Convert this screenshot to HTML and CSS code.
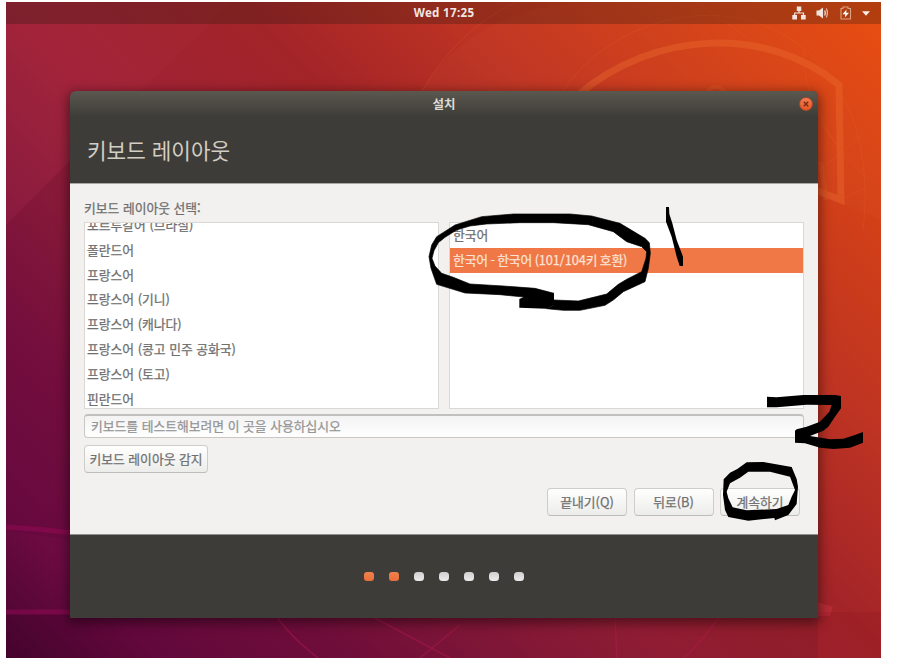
FILE: index.html
```html
<!DOCTYPE html>
<html lang="ko">
<head>
<meta charset="utf-8">
<title>설치</title>
<link rel="stylesheet" href="styles.css">
</head>
<body>
<div class="desktop">
  <svg class="wallpaper" viewBox="6 2 875 656" aria-hidden="true">
    <path fill="#ff7070" opacity=".03" d="M52 2 140 91 210 24 230 2ZM6 2H52L140 91 6 225Z"/>
    <path fill="#300018" opacity=".07" d="M6 225 70 161V540L6 530Z"/>
    <path fill="#300018" opacity=".15" d="M6 614H400L818 612V658H6Z"/>
    <path fill="#ff9060" opacity=".04" d="M420 91Q480 2 600 2H881V220L640 120Z"/>
    <g fill="none" stroke="#f07030" opacity=".36">
      <path stroke-width="7" d="M578 95C655 30 767 25 839 85L841 200 815 190"/>
      <path stroke-width="1" opacity=".5" d="M422 91Q465 18 535 -5M563 91C600 35 680 0 755 22C825 45 876 115 863 230M697 2 757 45M804 50Q800 90 841 152M820 170 862 135M841 152 866 177M841 200 866 187M822 125 845 155"/>
      <circle cx="716" cy="97" r="10" stroke-width="4" opacity=".5"/>
      <path stroke-width="5" opacity=".5" d="m821 162 5 38"/>
    </g>
    <g fill="none" stroke="#a20a5b" opacity=".42">
      <path stroke-width="5" d="M6 527Q40 529 75 533M6 612H72"/>
      <path stroke-width="1.500" stroke="#b81a50" d="M277 617Q290 636 318 658M373 617 450 658M460 625 420 658M615 617 617 658M719 617Q705 638 684 658"/>
    </g>
    <path fill="#c3303c" opacity=".6" d="m817 602 16 5-3 9h-14z"/>
    <path fill="#8a1020" opacity=".18" d="M818 612H881V658H818Z"/>
  </svg>

  <header class="topbar">
    <span class="clock">Wed 17:25</span>
    <div class="tray">
      <svg width="14" height="14" viewBox="0 0 14 14" fill="#f1e5df"><path d="M4.800 .5h4.500v4.500H4.800zM.3 9H5v4.500H.3zM9 9h4.700v4.500H9z"/><path d="M7 4v3M2.700 9V7H11.500v2" fill="none" stroke="#f1e5df" stroke-width="1.200"/></svg>
      <svg width="14" height="14" viewBox="0 0 14 14"><path fill="#f1e5df" d="M.5 4.500H3l4-3v11l-4-3H.5z"/><path d="M8.700 4.500Q10 7 8.700 9.500" fill="none" stroke="#f1e5df" stroke-width="1.300"/><path d="M10.300 2.500Q12.500 7 10.300 11.500" fill="none" stroke="#e0b49f" stroke-width="1.300"/></svg>
      <svg width="12" height="14" viewBox="0 0 12 14"><path d="M1 2.500h2V1h5v1.500h2.500V13H1z" fill="none" stroke="#dba184" stroke-width="1.100"/><path fill="#fff" d="M6.500 3.500 2.500 8.300h2.800L4.800 11.500 9 6.700H6.200z"/></svg>
      <svg width="8" height="5" viewBox="0 0 8 5"><path fill="#f8eee8" d="M0 .3h8L4 4.800z"/></svg>
    </div>
  </header>

  <main class="window">
    <div class="titlebar">
      <span class="caption">설치</span>
      <button class="close" aria-label="닫기"><svg width="6" height="6" viewBox="0 0 6 6"><path d="m.8.8 4.400 4.400m0-4.400L.8 5.200" stroke="#6e2c15" stroke-width="1.300"/></svg></button>
    </div>
    <h1 class="heading">키보드 레이아웃</h1>
    <section class="content">
      <div class="label">키보드 레이아웃 선택:</div>
      <div class="lists">
        <ul class="list layouts">
          <li>포르투갈어 (브라질)</li>
          <li>폴란드어</li>
          <li>프랑스어</li>
          <li>프랑스어 (기니)</li>
          <li>프랑스어 (캐나다)</li>
          <li>프랑스어 (콩고 민주 공화국)</li>
          <li>프랑스어 (토고)</li>
          <li>핀란드어</li>
        </ul>
        <ul class="list variants">
          <li>한국어</li>
          <li class="selected">한국어 - 한국어 (101/104키 호환)</li>
        </ul>
      </div>
      <div class="entry">키보드를 테스트해보려면 이 곳을 사용하십시오</div>
      <button class="button detect">키보드 레이아웃 감지</button>
      <div class="actions">
        <button class="button">끝내기(Q)</button>
        <button class="button">뒤로(B)</button>
        <button class="button">계속하기</button>
      </div>
    </section>
    <footer class="steps">
      <i class="dot done"></i><i class="dot done"></i><i class="dot"></i><i class="dot"></i><i class="dot"></i><i class="dot"></i><i class="dot"></i>
    </footer>
  </main>
</div>

<svg class="ink" viewBox="0 0 897 665" aria-hidden="true">
  <g transform="translate(420 190) scale(.33333)">
    <path stroke="#000" stroke-width="2" d="M402 310 345 295 250 288 150 282 100 262 65 250 45 228 36 205 42 182 55 158 75 142 110 120 150 108 200 102 300 98 400 98 505 104 580 125 620 155 665 170 680 185 678 205 665 245 620 268 595 283 560 312 520 322 475 333 402 330V345L380 356 430 361H480L555 346 580 330 610 305 675 275 685 235 691 190 688 158 675 145 600 100 515 78 450 72H280L185 80 105 105 50 140 35 165 27 200 33 235 50 283 135 309 240 314 320 322Z"/>
    <path d="M298 327 345 305 402 310V345L380 356 298 353Z"/>
    <path d="M738 51H747L748 72 757 100 770 150 789 200V228H779L770 200 755 140 738 95Z"/>
  </g>
  <g transform="translate(530 380) scale(.33333)">
    <path d="M711 50V82H740L830 74 905 75 898 95 870 125 830 140 800 148 795 152V188L825 190 870 203 910 207 960 203 999 188V156L975 165 940 176 900 178 840 168 880 152 895 140 912 115 933 85V48L915 45H820L740 52Z"/>
    <path fill-rule="evenodd" d="M650 247 700 246 785 261 800 297 804 320 800 372 775 405 735 421 733 414 655 422 595 411 585 390 579 345 581 298 600 278 622 267ZM655 275 630 293 600 310 590 335 595 355 608 382 650 391 740 387 775 375 785 350 795 330 780 290 720 275Z"/>
  </g>
</svg>
</body>
</html>
```
FILE: styles.css
```css
* { box-sizing: border-box; }

body {
  margin: 0;
  height: 665px;
  padding: 2px 16px 7px 6px;
  overflow: hidden;
  background: #fff;
  font-family: "Noto Sans CJK KR", sans-serif;
  font-size: 12.8px;
  color: #6e6e6e;
}

.desktop {
  position: relative;
  display: flex;
  flex-direction: column;
  width: 875px;
  height: 656px;
  overflow: hidden;
  background: linear-gradient(45deg, #480430 0%, #6c0a42 10%, #7a1040 22%, #8c1a3c 32%, #a02238 43%, #a32428 58%, #bd3323 71%, #d24018 85%, #e84b0e 100%);
}

.wallpaper { position: absolute; inset: 0; width: 875px; height: 656px; }

.topbar {
  position: relative;
  display: grid;
  grid-template-columns: 1fr auto 1fr;
  align-items: center;
  height: 22px;
  padding-right: 11px;
  background: rgba(20, 20, 10, .25);
  color: #f0e6e2;
}

.clock {
  grid-column: 2;
  padding-left: 12px;
  font: bold 11.5px/20px "Noto Sans", sans-serif;
  letter-spacing: .35px;
}

.tray { display: flex; justify-content: flex-end; align-items: center; gap: 10px; }

.window {
  position: relative;
  display: flex;
  flex-direction: column;
  width: 748px;
  height: 526.5px;
  margin: 67px 0 0 64px;
  border-radius: 6px 6px 0 0;
  background: #3e3c38;
  box-shadow: 0 3px 12px 2px rgba(0, 0, 0, .45);
}

.titlebar {
  display: grid;
  grid-template-columns: 1fr auto 1fr;
  align-items: center;
  height: 26px;
  padding-right: 5px;
  border-radius: 6px 6px 0 0;
  background: linear-gradient(#5b5850, #3e3c38);
}

.caption { grid-column: 2; padding-left: 5px; color: #dfdbd2; font-size: 12.5px; font-weight: 700; line-height: 24px; }

.close {
  display: flex;
  align-items: center;
  justify-content: center;
  justify-self: end;
  width: 14px;
  height: 14px;
  padding: 0;
  border: 1px solid #a84a28;
  border-radius: 50%;
  background: linear-gradient(#f37d55, #e95420);
}

.heading {
  height: 66px;
  margin: 0;
  padding-left: 17px;
  color: #d3cec3;
  font-size: 21.3px;
  font-weight: 400;
  line-height: 66px;
}

.content {
  display: flex;
  flex-direction: column;
  height: 351.5px;
  padding: 15px 14px 0;
  border-top: 1px solid #aaa8a4;
  border-bottom: 1px solid #92908c;
  background: #f2f1ef;
  -webkit-text-stroke: .25px;
}

.label { height: 23px; line-height: 17px; }

.lists { display: grid; grid-template-columns: 355px 355px; gap: 10px; }

.list {
  height: 187px;
  margin: 0;
  padding: 0;
  overflow: hidden;
  border: 1px solid #dad8d5;
  background: #fff;
  list-style: none;
}

.list li { height: 24.800px; padding-left: 2px; line-height: 24.800px; white-space: nowrap; }
.layouts li:first-child { margin-top: -10px; }
.variants li { padding-left: 3px; }
.list .selected { background: #f07746; color: #fbe3d6; letter-spacing: -.12px; word-spacing: -1px; }

.entry {
  height: 24px;
  margin: 5px 0 0;
  padding-left: 6px;
  border: 1px solid #c9c7c4;
  border-top: 2px solid #c2c0bd;
  border-radius: 4px;
  background: linear-gradient(#f3f3f3, #fff);
  color: #949494;
  line-height: 20px;
}

.button {
  width: 80px;
  height: 28px;
  padding: 0;
  border: 1px solid #cfcdca;
  border-bottom-color: #bebcb9;
  border-radius: 4px;
  background: linear-gradient(#fff, #ececea);
  color: #707070;
  font: inherit;
  line-height: 26px;
}

.detect { width: 124px; margin: 7px 0 0; }
.actions { display: flex; justify-content: flex-end; gap: 6.500px; margin: 15px 4px 0 0; }

.steps { display: flex; justify-content: center; gap: 15px; padding: 37px 0 0 0; }
.dot { width: 10px; height: 9px; border-radius: 3.500px; background: linear-gradient(#d0d0d0, #ececec); }
.dot.done { border-radius: 3px; background: linear-gradient(#f0814f, #e96f39); }

.ink { position: absolute; left: 0; top: 0; width: 897px; height: 665px; fill: #000; pointer-events: none; }
```
